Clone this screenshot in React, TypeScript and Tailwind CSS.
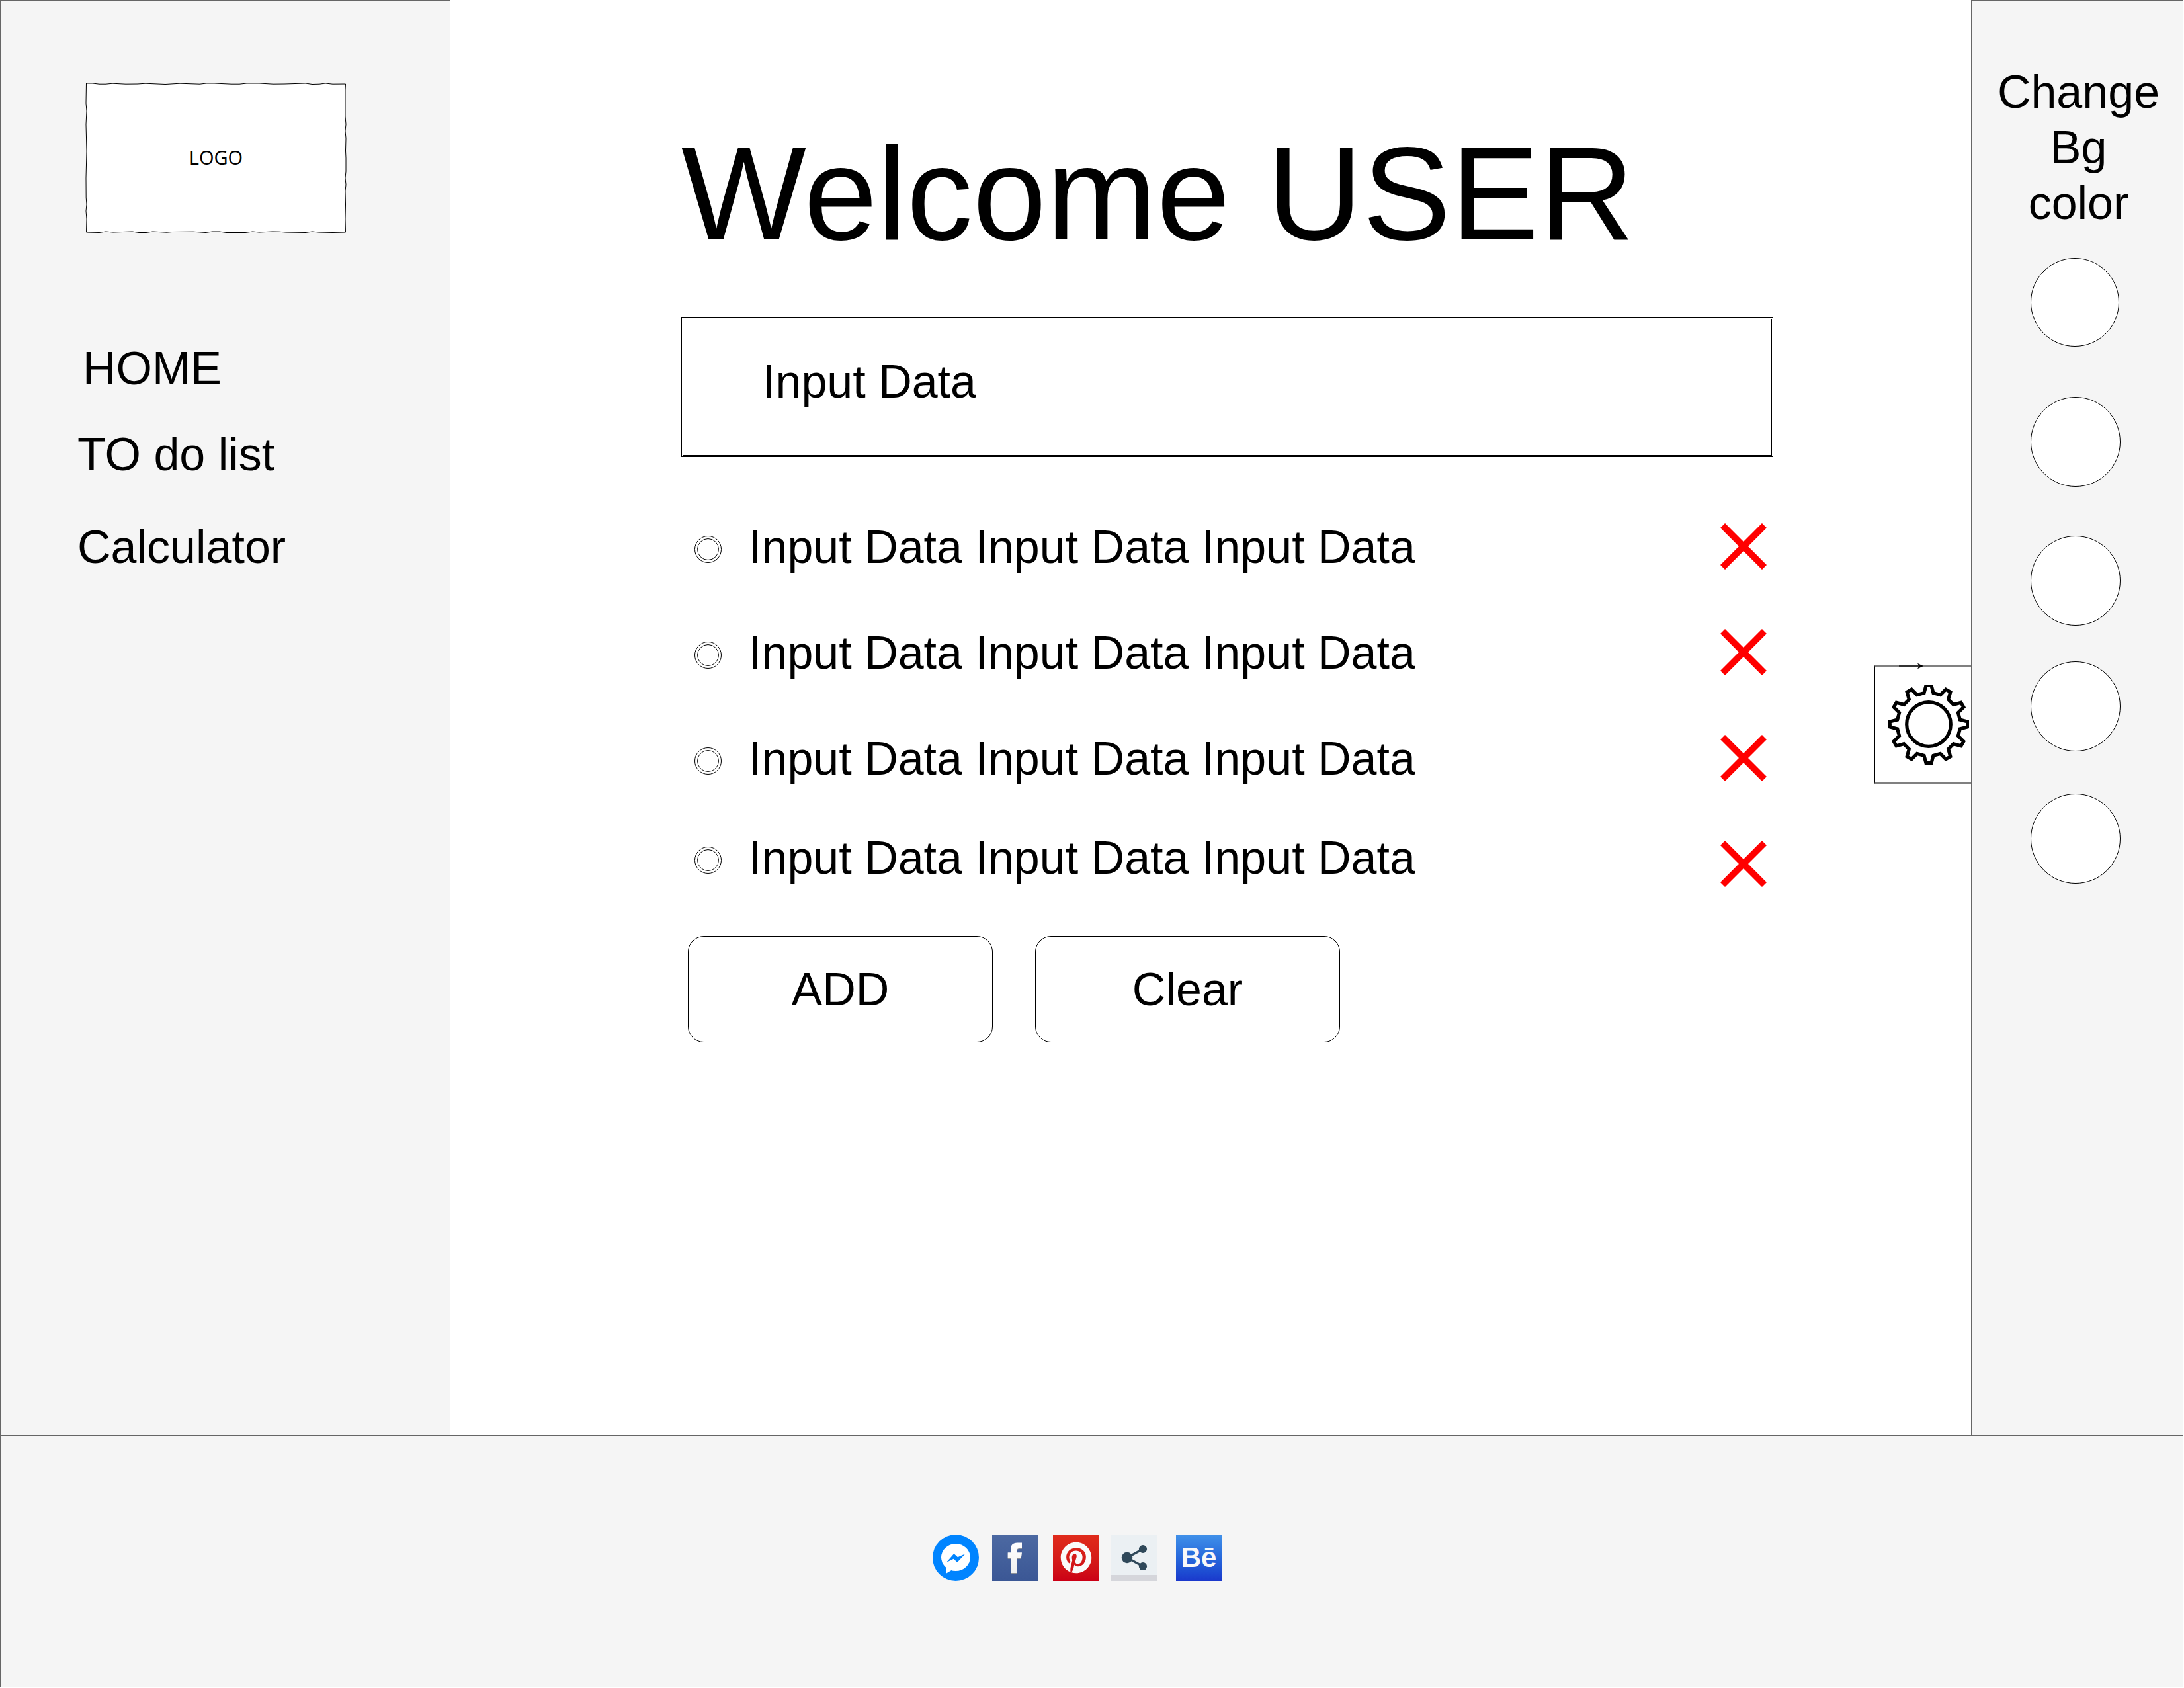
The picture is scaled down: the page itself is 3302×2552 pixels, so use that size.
import React from "react";
import { FaPinterest } from "react-icons/fa";

const navItems = [
  { label: "HOME", className: "pl-2" },
  { label: "TO do list", className: "mt-[46px]" },
  { label: "Calculator", className: "mt-14" },
];

const tasks = [
  { id: "task-1", className: "" },
  { id: "task-2", className: "" },
  { id: "task-3", className: "" },
  { id: "task-4", className: "pb-5" },
];

const swatches = [
  "size-[134px]",
  "mt-[76px] size-[136px]",
  "mt-[74px] size-[136px]",
  "mt-[54px] size-[136px]",
  "mt-16 size-[136px]",
];

function Logo() {
  return (
    <div className="relative flex h-[225px] w-[393px] items-center justify-center">
      <svg
        aria-hidden="true"
        viewBox="0 0 393 225"
        className="absolute inset-0 size-full overflow-visible"
      >
        <path
          d="M0.5 0 L10 0 L20 1.2 L30 1.2 L40 0.2 L60 1.2 L78 1 L90 0.2 L120 1.5 L142 0.2 L172 1.2 L182 0 L194 0 L220 1.2 L232 1.2 L243 0 L262 0 L283 1.2 L300 1 L332 0 L342 1.5 L353 1.2 L362 0 L373 1.2 L392.500 1 L392 10 L392 50 L393 62 L392 72 L393 83 L392.500 102 L393 113 L393 133 L392 143 L393 153 L392 163 L392.500 183 L392 205 L392.500 225 L373 225.500 L352 225 L342 224 L332 225.500 L302 225 L292 224.200 L282 224 L262 225 L252 224 L241 225.500 L212 225.500 L202 224 L191 224 L181 225.500 L162 224.200 L130 224.500 L122 225.200 L101 224 L91 225.500 L80 225.500 L70 224 L41 225 L30 224 L20 225.500 L0.500 225 L1 205 L0 193 L1 183 L0.200 173 L0 143 L0.500 123 L1 103 L0.500 82 L0 62 L1 42 L0 30 Z"
          fill="#fff"
          stroke="#000"
          strokeWidth="1"
        />
      </svg>
      <span className="relative pb-0.5 font-['Open_Sans',sans-serif] text-[29px] leading-9">LOGO</span>
    </div>
  );
}

function GearIcon() {
  const tooth = [
    [-7, -47.3],
    [-4, -58.7],
    [4, -58.7],
    [7, -47.3],
  ];
  const points = Array.from({ length: 12 }, (_, i) => {
    const a = (i * Math.PI) / 6;
    return tooth
      .map(([x, y]) =>
        [x * Math.cos(a) - y * Math.sin(a), x * Math.sin(a) + y * Math.cos(a)]
          .map((n) => n.toFixed(2))
          .join(","),
      )
      .join(" ");
  }).join(" ");
  return (
    <svg aria-hidden="true" viewBox="-61 -60 122 122" className="size-[122px]">
      <polygon points={points} fill="#fff" stroke="#000" strokeWidth="5.2" />
      <circle r="33.3" fill="#fff" stroke="#000" strokeWidth="5.2" />
    </svg>
  );
}

function CrossIcon() {
  return (
    <svg aria-hidden="true" viewBox="0 0 70 70" className="size-[70px]">
      <path d="M3.500 3.500 L66.500 66.500 M66.500 3.500 L3.500 66.500" stroke="#f00" strokeWidth="10" />
    </svg>
  );
}

function MessengerIcon() {
  return (
    <svg aria-hidden="true" viewBox="0 0 70 70" className="size-[70px]">
      <circle cx="35" cy="35" r="35" fill="#0084ff" />
      <ellipse cx="35" cy="34.5" rx="22" ry="20.5" fill="#fff" />
      <path d="M21 47 V58.500 L30 53 Z" fill="#fff" />
      <path d="M21 42 L32.300 29 L38 34.300 L49.300 29.300 L37.300 42 L31.700 36.700 Z" fill="#0084ff" />
    </svg>
  );
}

function FacebookIcon() {
  return (
    <svg aria-hidden="true" viewBox="0 0 70 70" className="size-[70px]">
      <defs>
        <linearGradient id="fb" x1="0" y1="0" x2="0" y2="1">
          <stop offset="0" stopColor="#4c69a2" />
          <stop offset="1" stopColor="#3b5795" />
        </linearGradient>
        <linearGradient id="fb-f" x1="0" y1="0" x2="0" y2="1">
          <stop offset="0" stopColor="#fff" />
          <stop offset="1" stopColor="#f0f0f0" />
        </linearGradient>
      </defs>
      <rect width="70" height="70" fill="url(#fb)" />
      <path
        d="M28 59 V37 H23.700 V28.300 H28 V23.500 C28 17 31.500 13.500 38 13.500 H45 V22 H41 C38.500 22 37.700 23 37.700 25 V28.300 H45 L43.700 37 H37.700 V59 Z"
        fill="#8b8f96"
      />
      <path
        d="M28 58 V36 H23.700 V27.300 H28 V22.500 C28 16 31.500 12.500 38 12.500 H45 V21 H41 C38.500 21 37.700 22 37.700 24 V27.300 H45 L43.700 36 H37.700 V58 Z"
        fill="url(#fb-f)"
      />
    </svg>
  );
}

function ShareIcon() {
  return (
    <svg aria-hidden="true" viewBox="0 0 70 70" className="size-[70px]">
      <rect width="70" height="70" fill="#ebf0f3" />
      <rect y="61" width="70" height="9" fill="#d5d6db" />
      <path d="M48 22 L24 35 L48 48" fill="none" stroke="#2f4859" strokeWidth="3.4" />
      <circle cx="24" cy="35" r="8.3" fill="#2f4859" />
      <circle cx="48" cy="22" r="6.1" fill="#2f4859" />
      <circle cx="48" cy="48" r="6.1" fill="#2f4859" />
    </svg>
  );
}

export default function App() {
  return (
    <div className="flex min-h-screen flex-col bg-white pr-px pb-px font-['Liberation_Sans',Arial,sans-serif] text-[70px] leading-[84px] text-black">
      <div className="flex flex-1">
        <aside className="w-[681px] shrink-0 border border-b-0 border-[#666666] bg-[#f5f5f5] pt-[125px]">
          <div className="pl-[129px]">
            <Logo />
          </div>
          <nav className="mt-[164px] flex flex-col items-start pl-[116px]">
            {navItems.map((item) => (
              <a key={item.label} href="#" className={item.className}>
                {item.label}
              </a>
            ))}
          </nav>
          <div className="mt-[51px] mr-[29px] ml-[69px] h-px bg-[repeating-linear-gradient(90deg,#000_0_3px,transparent_3px_6px)]" />
        </aside>

        <main className="flex min-w-0 flex-1">
          <div className="min-w-0 flex-1 pt-[173px] pr-[153px] pl-[349px]">
            <h1 className="text-[200px] leading-[240px] whitespace-nowrap">Welcome USER</h1>
            <input
              aria-label="New item"
              type="text"
              defaultValue="Input Data"
              className="mt-[67px] block h-[211px] w-full border-[3px] border-double border-black bg-white pb-[18px] pl-[120px] outline-none"
            />
            <ul className="mt-[55px]">
              {tasks.map((task) => (
                <li key={task.id} className="flex h-40 items-center justify-between pr-[10px] pl-5">
                  <div className={`flex items-center ${task.className}`}>
                    <input
                      id={task.id}
                      type="radio"
                      className="m-1 mt-3 size-[33px] appearance-none rounded-full border border-black outline-1 outline-offset-[3px] outline-black"
                    />
                    <label htmlFor={task.id} className="pt-0.5 pl-[41px]">
                      Input Data Input Data Input Data
                    </label>
                  </div>
                  <button type="button" aria-label="Delete item">
                    <CrossIcon />
                  </button>
                </li>
              ))}
            </ul>
            <div className="mt-[29px] flex gap-16 pl-[10px]">
              <button type="button" className="h-[161px] w-[461px] rounded-3xl border border-black bg-white">
                ADD
              </button>
              <button type="button" className="h-[161px] w-[461px] rounded-3xl border border-black bg-white">
                Clear
              </button>
            </div>
          </div>
          <button
            type="button"
            aria-label="Settings"
            className="relative mt-[1006px] flex h-[179px] w-[146px] shrink-0 items-center justify-end self-start border-y-2 border-l border-y-[#808080] border-l-black bg-white pr-[3px]"
          >
            <svg
              aria-hidden="true"
              viewBox="0 0 38 10"
              className="absolute -top-1.5 left-9 h-[10px] w-[38px]"
            >
              <path d="M0 5 H30" stroke="#333" strokeWidth="2" />
              <path d="M37 5 L28 9.300 L30.500 5 L28 0.700 Z" fill="#000" />
            </svg>
            <GearIcon />
          </button>
        </main>

        <aside className="w-[321px] shrink-0 border border-b-0 border-[#666666] bg-[#f5f5f5] pt-24">
          <h2 className="pr-8 pl-9 text-center">Change Bg color</h2>
          <div className="mt-[41px] flex flex-col items-start pl-[89px]">
            {swatches.map((className, i) => (
              <button
                key={i}
                type="button"
                aria-label={`Background color ${i + 1}`}
                className={`rounded-full border border-black bg-white ${className}`}
              />
            ))}
          </div>
        </aside>
      </div>

      <footer className="flex h-[381px] items-start justify-center border border-[#666666] bg-[#f5f5f5] pt-[149px] pr-11">
        <a href="#" aria-label="Messenger">
          <MessengerIcon />
        </a>
        <a href="#" aria-label="Facebook" className="ml-5">
          <FacebookIcon />
        </a>
        <a
          href="#"
          aria-label="Pinterest"
          className="ml-[22px] flex size-[70px] items-center justify-center bg-linear-to-b from-[#e02b1b] to-[#cb0016]"
        >
          <FaPinterest aria-hidden="true" className="size-12 text-[#fafafa]" />
        </a>
        <a href="#" aria-label="Share" className="ml-[18px]">
          <ShareIcon />
        </a>
        <a
          href="#"
          aria-label="Behance"
          className="ml-7 flex size-[70px] items-center justify-center bg-linear-to-b from-[#4191e9] to-[#1b38cc] text-[42px] leading-[70px] font-bold text-[#f8f8f8]"
        >
          Bē
        </a>
      </footer>
    </div>
  );
}
